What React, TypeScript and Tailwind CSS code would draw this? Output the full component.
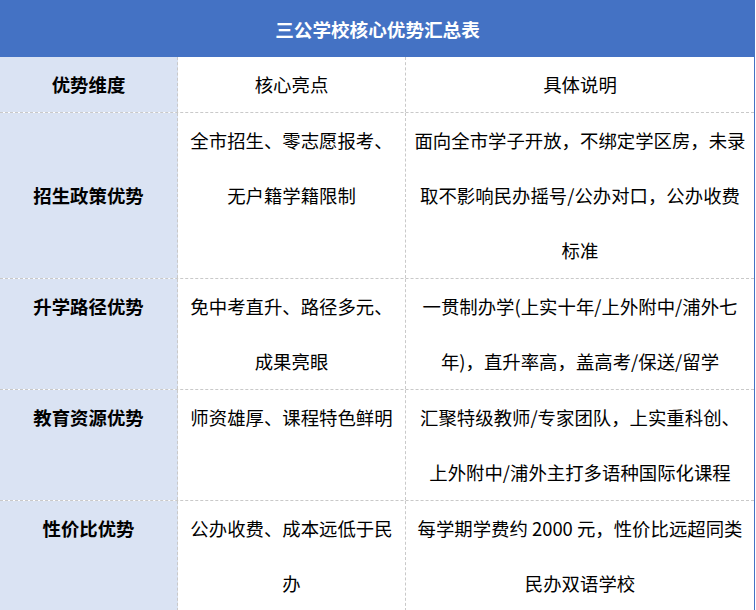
import React from 'react';

type Row = {
  label: string;
  points: string[];
  detail: string[];
  centerLabel?: boolean;
};

const rows: Row[] = [
  {
    label: '招生政策优势',
    points: ['全市招生、零志愿报考、', '无户籍学籍限制'],
    detail: ['面向全市学子开放，不绑定学区房，未录', '取不影响民办摇号/公办对口，公办收费', '标准'],
    centerLabel: true,
  },
  {
    label: '升学路径优势',
    points: ['免中考直升、路径多元、', '成果亮眼'],
    detail: ['一贯制办学(上实十年/上外附中/浦外七', '年)，直升率高，盖高考/保送/留学'],
  },
  {
    label: '教育资源优势',
    points: ['师资雄厚、课程特色鲜明'],
    detail: ['汇聚特级教师/专家团队，上实重科创、', '上外附中/浦外主打多语种国际化课程'],
  },
  {
    label: '性价比优势',
    points: ['公办收费、成本远低于民', '办'],
    detail: ['每学期学费约 2000 元，性价比远超同类', '民办双语学校'],
  },
];

function Lines({ lines }: { lines: string[] }) {
  return (
    <>
      {lines.map((l, i) => (
        <span key={i} className="block whitespace-nowrap">
          {l}
        </span>
      ))}
    </>
  );
}

export default function App() {
  return (
    <div
      className="w-[756px] h-[610px] overflow-hidden bg-white text-[18.4px] leading-[55px] text-black"
      style={{ fontFamily: '"Microsoft YaHei", "Noto Sans CJK SC", "Noto Sans", sans-serif' }}
    >
      <div className="w-[755px]">
        {/* Title bar */}
        <div className="h-[57px] bg-[#4472C4] flex items-center justify-center text-white font-bold text-[18.6px]">
          三公学校核心优势汇总表
        </div>

        <div className="border-r border-[#4472C4]">
          {/* Column headings */}
          <div className="grid grid-cols-[178px_228px_1fr] border-b border-dashed border-[#c9c9c9]">
            <div className="bg-[#DAE3F3] border-r border-dashed border-[#c9c9c9] text-center font-bold">
              优势维度
            </div>
            <div className="border-r border-dashed border-[#c9c9c9] text-center">核心亮点</div>
            <div className="text-center">具体说明</div>
          </div>

          {rows.map((r) => (
            <div
              key={r.label}
              className="grid grid-cols-[178px_228px_1fr] border-b border-dashed border-[#c9c9c9]"
            >
              <div
                className={`bg-[#DAE3F3] border-r border-dashed border-[#c9c9c9] flex justify-center font-bold ${
                  r.centerLabel ? 'items-center' : 'items-start'
                }`}
              >
                {r.label}
              </div>
              <div className="border-r border-dashed border-[#c9c9c9] text-center">
                <Lines lines={r.points} />
              </div>
              <div className="text-center">
                <Lines lines={r.detail} />
              </div>
            </div>
          ))}
        </div>
      </div>
    </div>
  );
}
